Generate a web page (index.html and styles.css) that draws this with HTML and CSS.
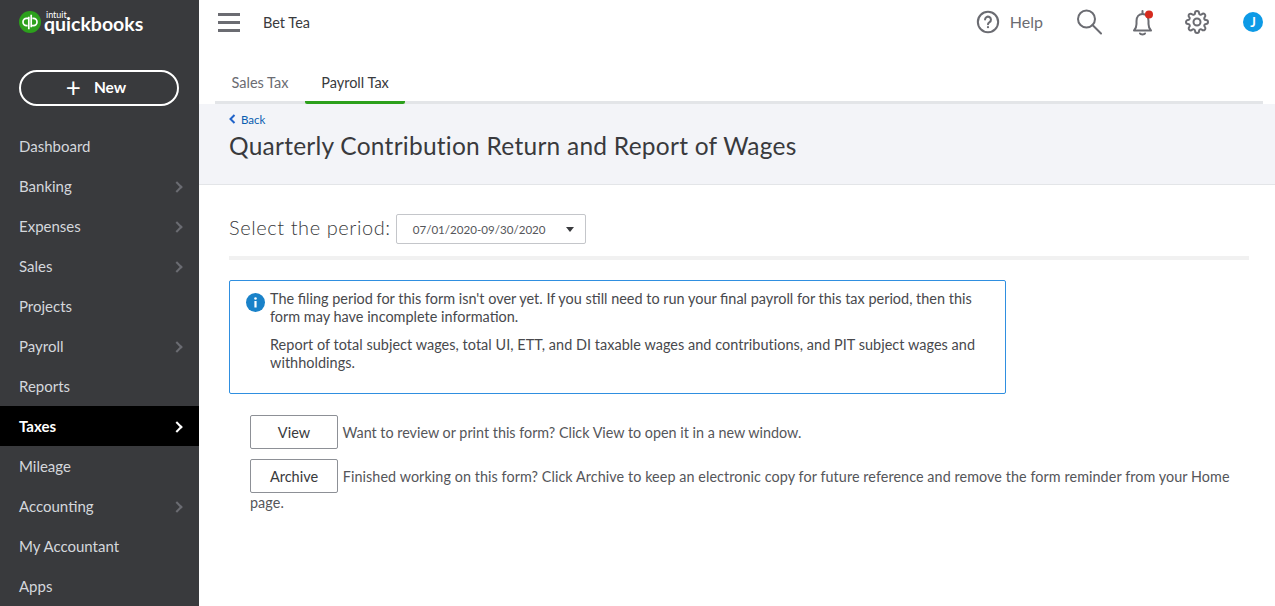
FILE: index.html
```html
<!DOCTYPE html>
<html lang="en">
<head>
  <meta charset="UTF-8">
  <title>Quarterly Contribution Return and Report of Wages</title>
  <link rel="stylesheet" href="styles.css">
</head>
<body>

  <aside class="sidebar">
    <div class="logo">
      <svg class="logo-mark" width="22" height="22" viewBox="0 0 22 22">
        <circle cx="11" cy="11" r="11" fill="#2ca01c"/>
        <path d="M9.800 5.800v12.400M9.800 7.400H7.600a3.600 3.600 0 0 0 0 7.200h1M12.200 16.200V3.800M12.200 14.600h2.200a3.600 3.600 0 0 0 0-7.200h-1" fill="none" stroke="#fff" stroke-width="1.700"/>
      </svg>
      <div class="logo-text">
        <span class="logo-intuit">intuit</span>
        <span class="logo-name">quickbooks</span>
      </div>
    </div>

    <button class="new-btn"><span class="new-plus">+</span>New</button>

    <nav class="nav">
      <a class="nav-item">Dashboard</a>
      <a class="nav-item has-sub">Banking</a>
      <a class="nav-item has-sub">Expenses</a>
      <a class="nav-item has-sub">Sales</a>
      <a class="nav-item">Projects</a>
      <a class="nav-item has-sub">Payroll</a>
      <a class="nav-item">Reports</a>
      <a class="nav-item has-sub active">Taxes</a>
      <a class="nav-item">Mileage</a>
      <a class="nav-item has-sub">Accounting</a>
      <a class="nav-item">My Accountant</a>
      <a class="nav-item">Apps</a>
    </nav>
  </aside>

  <main class="main">
    <header class="topbar">
      <div class="burger"><span></span><span></span><span></span></div>
      <div class="company">Bet Tea</div>
      <div class="top-actions">
        <div class="help">
          <svg width="24" height="24" viewBox="0 0 26 26" fill="none" stroke="#6b6c72" stroke-width="2.200">
            <circle cx="13" cy="13" r="11"/>
            <path d="M9.800 10.400a3.200 3.200 0 1 1 4.900 2.700c-1.100.7-1.700 1.200-1.700 2.400" stroke-linecap="round"/>
            <circle cx="13" cy="18.600" r="1.200" fill="#6b6c72" stroke="none"/>
          </svg>
          <span>Help</span>
        </div>
        <svg class="search" width="26" height="26" viewBox="0 0 26 26" fill="none" stroke="#6b6c72" stroke-width="2">
          <circle cx="10.500" cy="10" r="8.500"/>
          <path d="M16.500 16l8.500 8.500" stroke-linecap="round"/>
        </svg>
        <svg class="bell" width="26" height="28" viewBox="0 0 26 28" fill="none" stroke="#6b6c72" stroke-width="2">
          <path d="M4 22.500c1.500-1.500 2.500-3.500 2.500-6.500v-3c0-4 2.500-7 6-7s6 3 6 7v3c0 3 1 5 2.500 6.500z" stroke-linejoin="round"/>
          <path d="M12.500 6V3" stroke-linecap="round"/>
          <path d="M10 25.500c.6 1.200 4.400 1.200 5 0" stroke-linecap="round"/>
          <circle cx="19" cy="6.500" r="4" fill="#d52b1e" stroke="none"/>
        </svg>
        <svg class="gear" width="24" height="24" viewBox="0 0 24 24" fill="none" stroke="#6b6c72" stroke-width="2" stroke-linejoin="round">
          <circle cx="12" cy="12" r="3.500"/>
          <path d="M19.400 15a1.650 1.650 0 0 0 .33 1.820l.06.06a2 2 0 0 1 0 2.830 2 2 0 0 1-2.830 0l-.06-.06a1.650 1.650 0 0 0-1.820-.33 1.650 1.650 0 0 0-1 1.510V21a2 2 0 0 1-2 2 2 2 0 0 1-2-2v-.09A1.650 1.650 0 0 0 9 19.400a1.650 1.650 0 0 0-1.820.33l-.06.06a2 2 0 0 1-2.830 0 2 2 0 0 1 0-2.830l.06-.06a1.650 1.650 0 0 0 .33-1.820 1.650 1.650 0 0 0-1.510-1H3a2 2 0 0 1-2-2 2 2 0 0 1 2-2h.09A1.650 1.650 0 0 0 4.600 9a1.650 1.650 0 0 0-.33-1.820l-.06-.06a2 2 0 0 1 0-2.830 2 2 0 0 1 2.830 0l.06.06a1.650 1.650 0 0 0 1.820.33H9a1.650 1.650 0 0 0 1-1.510V3a2 2 0 0 1 2-2 2 2 0 0 1 2 2v.09a1.650 1.650 0 0 0 1 1.510 1.650 1.650 0 0 0 1.820-.33l.06-.06a2 2 0 0 1 2.830 0 2 2 0 0 1 0 2.830l-.06.06a1.650 1.650 0 0 0-.33 1.820V9a1.650 1.650 0 0 0 1.510 1H21a2 2 0 0 1 2 2 2 2 0 0 1-2 2h-.09a1.650 1.650 0 0 0-1.510 1z"/>
        </svg>
        <div class="avatar">J</div>
      </div>
    </header>

    <div class="tabs">
      <a class="tab">Sales Tax</a>
      <a class="tab tab-active">Payroll Tax</a>
    </div>

    <section class="band">
      <a class="back">
        <svg width="7" height="10" viewBox="0 0 7 10" fill="none" stroke="#2063c9" stroke-width="2"><path d="M5.500 1L1.500 5l4 4"/></svg>
        Back
      </a>
      <h1>Quarterly Contribution Return and Report of Wages</h1>
    </section>

    <section class="content">
      <div class="period">
        <label>Select the period:</label>
        <div class="select">
          <span>07/01/2020-09/30/2020</span>
          <i class="caret"></i>
        </div>
      </div>

      <div class="notice">
        <svg class="info" width="19" height="19" viewBox="0 0 19 19">
          <circle cx="9.500" cy="9.500" r="9.500" fill="#1a82c9"/>
          <rect x="8.400" y="8" width="2.200" height="6.500" fill="#fff"/>
          <circle cx="9.500" cy="5.500" r="1.300" fill="#fff"/>
        </svg>
        <div class="notice-text">
          <p>The filing period for this form isn't over yet. If you still need to run your final payroll for this tax period, then this form may have incomplete information.</p>
          <p class="notice-wide">Report of total subject wages, total UI, ETT, and DI taxable wages and contributions, and PIT subject wages and withholdings.</p>
        </div>
      </div>

      <div class="form-actions">
        <div class="action"><button class="btn">View</button> Want to review or print this form? Click View to open it in a new window.</div>
        <div class="action action-wide"><button class="btn">Archive</button> Finished working on this form? Click Archive to keep an electronic copy for future reference and remove the form reminder from your Home page.</div>
      </div>
    </section>
  </main>

</body>
</html>
```

FILE: styles.css
```css
* {
  box-sizing: border-box;
}

html, body {
  height: 606px;
  overflow: hidden;
}

body {
  margin: 0;
  display: flex;
  font-family: 'Lato', 'Liberation Sans', sans-serif;
  color: #393a3d;
  background-color: #fff;
}

/* Sidebar */
.sidebar {
  width: 199px;
  flex-shrink: 0;
  height: 606px;
  overflow: hidden;
  background-color: #393a3d;
  color: #d4d7dc;
}

.logo {
  display: flex;
  align-items: center;
  gap: 3px;
  height: 45px;
  padding-left: 19px;
  color: #fff;
}

.logo-mark {
  margin-top: -2px;
}

.logo-text {
  display: flex;
  flex-direction: column;
  margin-top: -3px;
}

.logo-intuit {
  font-size: 9px;
  line-height: 7px;
  margin-left: 2px;
  font-weight: 400;
}

.logo-name {
  font-size: 19.500px;
  line-height: 14px;
  margin-top: -1px;
  font-weight: 700;
}

.new-btn {
  display: flex;
  align-items: center;
  justify-content: center;
  width: 160px;
  height: 36px;
  margin: 25px 0 0 19px;
  padding: 0 6px 2px 0;
  background: transparent;
  border: 2px solid #fff;
  border-radius: 18px;
  color: #fff;
  font-family: inherit;
  font-size: 15.500px;
  font-weight: 700;
}

.new-plus {
  font-size: 26px;
  font-weight: 400;
  line-height: 20px;
  margin-right: 13px;
}

.nav {
  margin-top: 20px;
}

.nav-item {
  display: flex;
  align-items: center;
  position: relative;
  height: 40px;
  padding-left: 19px;
  padding-bottom: 1px;
  font-size: 15px;
}

.nav-item.has-sub::after {
  content: "";
  position: absolute;
  right: 18px;
  top: 17px;
  width: 6px;
  height: 6px;
  border-top: 2px solid #6b6c72;
  border-right: 2px solid #6b6c72;
  transform: rotate(45deg);
}

.nav-item.active {
  background-color: #000;
  color: #fff;
  font-weight: 700;
}

.nav-item.active::after {
  border-color: #fff;
}

/* Top bar */
.main {
  flex: 1;
  min-width: 0;
}

.topbar {
  display: flex;
  align-items: center;
  height: 45px;
  padding-left: 19px;
}

.burger {
  display: flex;
  flex-direction: column;
  gap: 5px;
  width: 22px;
}

.burger span {
  height: 3px;
  background-color: #6b6c72;
}

.company {
  margin-left: 23px;
  font-size: 14.500px;
}

.top-actions {
  display: flex;
  align-items: center;
  margin-left: auto;
  margin-bottom: 2px;
  padding-right: 12px;
}

.help {
  display: flex;
  align-items: center;
  gap: 10px;
  font-size: 16px;
  color: #6b6c72;
}

.search {
  margin-left: 33px;
}

.bell {
  margin-left: 28px;
}

.gear {
  margin-left: 29px;
}

.avatar {
  width: 20px;
  height: 20px;
  margin-left: 34px;
  border-radius: 50%;
  background-color: #0d9ae6;
  color: #fff;
  font-size: 13px;
  font-weight: 700;
  line-height: 20px;
  text-align: center;
}

/* Tabs */
.tabs {
  display: flex;
  height: 59px;
  margin: 0 12px 0 16px;
  padding-top: 15px;
  border-bottom: 3px solid #e3e5e8;
}

.tab {
  width: 90px;
  height: 44px;
  line-height: 46px;
  text-align: center;
  font-size: 14.500px;
  color: #6b6c72;
}

.tab-active {
  width: 100px;
  color: #393a3d;
  border-bottom: 3px solid #2ca01c;
  border-radius: 0 0 2px 2px;
}

/* Grey title band */
.band {
  height: 81px;
  padding: 8px 30px 0;
  background-color: #f3f4f8;
  border-bottom: 1px solid #e3e5e8;
}

.back {
  display: flex;
  align-items: center;
  gap: 5px;
  height: 14px;
  font-size: 11.500px;
  color: #0a5eb0;
}

h1 {
  margin: 3px 0 0;
  font-size: 24.500px;
  font-weight: 400;
  line-height: 33px;
  letter-spacing: 0.25px;
}

/* Body of the page */
.content {
  padding: 29px 26px 0 30px;
}

.period {
  display: flex;
  align-items: center;
  gap: 5px;
  height: 46px;
  padding-bottom: 12px;
  border-bottom: 4px solid #f1f1f1;
}

.period label {
  margin-bottom: 4px;
  font-size: 20px;
  font-weight: 300;
  letter-spacing: 0.58px;
  color: #393a3d;
}

.select {
  display: flex;
  align-items: center;
  justify-content: space-between;
  width: 190px;
  height: 30px;
  padding: 0 11px 0 16px;
  border: 1px solid #c4c6ca;
  border-radius: 2px;
  font-size: 11.600px;
  color: #55565a;
}

.caret {
  border-left: 4px solid transparent;
  border-right: 4px solid transparent;
  border-top: 5px solid #393a3d;
}

.notice {
  display: flex;
  width: 777px;
  height: 114px;
  margin-top: 20px;
  padding: 9px 16px 0 16px;
  border: 1px solid #2f8fe0;
  border-radius: 2px;
  font-size: 14.450px;
  line-height: 18px;
  color: #48494d;
}

.info {
  flex-shrink: 0;
  margin-right: 5px;
  margin-top: 3px;
}

.notice-text p {
  margin: 0 0 10px;
}

.notice-text .notice-wide {
  letter-spacing: 0.04px;
}

.form-actions {
  margin-top: 21px;
  padding-left: 21px;
  font-size: 14.350px;
  line-height: 20px;
  color: #55565a;
}

.action {
  margin-bottom: 10px;
}

.action-wide {
  letter-spacing: 0.08px;
}

.btn {
  width: 88px;
  height: 34px;
  margin-right: 1px;
  background: #fff;
  border: 1px solid #8d9096;
  border-radius: 2px;
  font-family: inherit;
  font-size: 14.500px;
  color: #393a3d;
}
```
